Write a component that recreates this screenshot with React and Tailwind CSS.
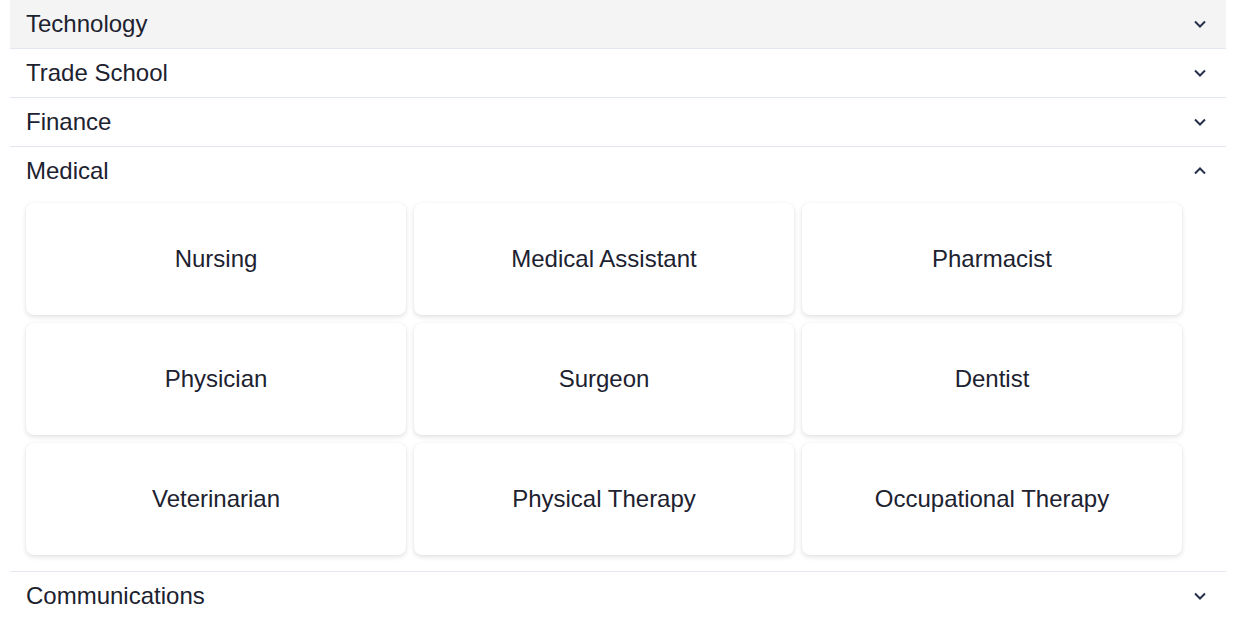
import React from "react";

const Chevron = ({ up }) => (
  <svg width="12" height="8" viewBox="0 0 12 8" className="shrink-0">
    <path
      d={up ? "M1 6.5 L6 1.5 L11 6.5" : "M1 1.5 L6 6.5 L11 1.5"}
      fill="none"
      stroke="#27304a"
      strokeWidth="2"
    />
  </svg>
);

const Header = ({ title, up, bg }) => (
  <div className={`h-12 flex items-center justify-between pl-4 pr-5 ${bg || ""}`}>
    <span className="text-[24px] text-[#1d2230]">{title}</span>
    <Chevron up={up} />
  </div>
);

const items = [
  "Nursing",
  "Medical Assistant",
  "Pharmacist",
  "Physician",
  "Surgeon",
  "Dentist",
  "Veterinarian",
  "Physical Therapy",
  "Occupational Therapy",
];

export default function App() {
  return (
    <div
      className="w-[1240px] h-[620px] overflow-hidden bg-white px-[10px] pr-[14px]"
      style={{ fontFamily: '"Liberation Sans", Arial, sans-serif' }}
    >
      <div className="border-b border-[#e3e8f0]">
        <Header title="Technology" bg="bg-[#f4f4f4]" />
      </div>
      <div className="border-b border-[#e3e8f0]">
        <Header title="Trade School" />
      </div>
      <div className="border-b border-[#e3e8f0]">
        <Header title="Finance" />
      </div>
      <div className="border-b border-[#e3e8f0]">
        <Header title="Medical" up />
        <div className="px-4 pt-2 pb-4">
          <div className="grid grid-cols-[repeat(3,380px)] gap-2">
            {items.map((t) => (
              <div
                key={t}
                className="h-[112px] rounded-lg bg-white flex items-center justify-center text-[24px] text-[#1d2230] shadow-[0_2px_5px_rgba(0,0,0,0.12),0_0_2px_rgba(0,0,0,0.04)]"
              >
                {t}
              </div>
            ))}
          </div>
        </div>
      </div>
      <div>
        <Header title="Communications" />
      </div>
    </div>
  );
}
